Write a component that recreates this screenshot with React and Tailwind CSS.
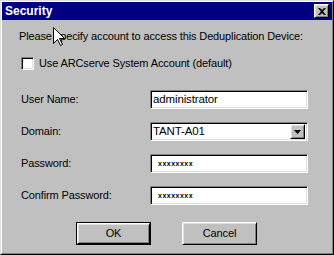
export default function App() {
  const sunken = 'border border-t-[#808080] border-l-[#808080] border-b-white border-r-white shadow-[inset_1px_1px_0_#000,inset_-1px_-1px_0_#dfdfdf]';
  const raised = 'border border-t-white border-l-white border-b-black border-r-black shadow-[inset_1px_1px_0_#dfdfdf,inset_-1px_-1px_0_#808080]';

  const rows = [
    { label: 'User Name:', value: 'administrator' },
    { label: 'Domain:', value: 'TANT-A01', combo: true },
    { label: 'Password:', value: 'xxxxxxxx', secret: true },
    { label: 'Confirm Password:', value: 'xxxxxxxx', secret: true },
  ];

  return (
    <div className="relative w-[334px] h-[255px] bg-[#c0c0c0] border border-t-[#dfdfdf] border-l-[#dfdfdf] border-b-black border-r-black text-[11px] tracking-[-0.13px] text-black font-['Liberation_Sans',Arial,sans-serif] leading-none select-none">
      <div className="h-full border border-t-white border-l-white border-b-[#808080] border-r-[#808080] flex flex-col">
        {/* title bar */}
        <div className="h-[18px] bg-[#000080] flex items-center justify-between pl-[3px] pr-[3px]">
          <span className="text-white font-bold text-[12px] tracking-normal">Security</span>
          <div className={`w-[15px] h-[14px] bg-[#c0c0c0] flex items-center justify-center ${raised}`}>
            <svg width="8" height="7" viewBox="0 0 8 7">
              <path d="M0 0h2l2 2 2-2h2L5 3.5 8 7H6L4 5 2 7H0l3-3.5z" fill="#000" />
            </svg>
          </div>
        </div>

        <div className="pl-[17px] pt-[11px] whitespace-nowrap">Please specify account to access this Deduplication Device:</div>

        <div className="flex items-center pl-[19px] mt-[15px]">
          <div className={`w-[13px] h-[13px] bg-white ${sunken}`} />
          <span className="ml-[5px]">Use ARCserve System Account (default)</span>
        </div>

        <div className="flex flex-col gap-[13px] mt-[20px] pl-[19px]">
          {rows.map((r) => (
            <div key={r.label} className="flex items-center h-[19px]">
              <span className="w-[129px]">{r.label}</span>
              <div className={`w-[158px] h-[19px] bg-white flex items-center ${sunken}`}>
                {r.secret ? (
                  <span className="pl-[7px] text-[7px] font-bold tracking-[0.5px]">{r.value}</span>
                ) : (
                  <span className="pl-[2px] text-[11.5px] flex-1">{r.value}</span>
                )}
                {r.combo && (
                  <div className={`w-[15px] h-[15px] mr-[2px] bg-[#c0c0c0] flex items-center justify-center ${raised}`}>
                    <svg width="7" height="4" viewBox="0 0 7 4">
                      <path d="M0 0h7L3.5 4z" fill="#000" />
                    </svg>
                  </div>
                )}
              </div>
            </div>
          ))}
        </div>

        <div className="flex pl-[74px] gap-[31px] mt-[17px]">
          <div className="border border-black">
            <div className={`w-[73px] h-[21px] flex items-center justify-center ${raised}`}>OK</div>
          </div>
          <div className={`w-[75px] h-[23px] flex items-center justify-center ${raised}`}>Cancel</div>
        </div>
      </div>

      {/* mouse pointer */}
      <svg className="absolute left-[52px] top-[26px]" width="13" height="20" viewBox="0 0 13 20">
        <path d="M0.5 0.5V16.5L4.5 12.5L7.5 18.5L9.5 17.5L6.5 11.5H11.5Z" fill="#fff" stroke="#000" strokeWidth="1" />
      </svg>
    </div>
  );
}
